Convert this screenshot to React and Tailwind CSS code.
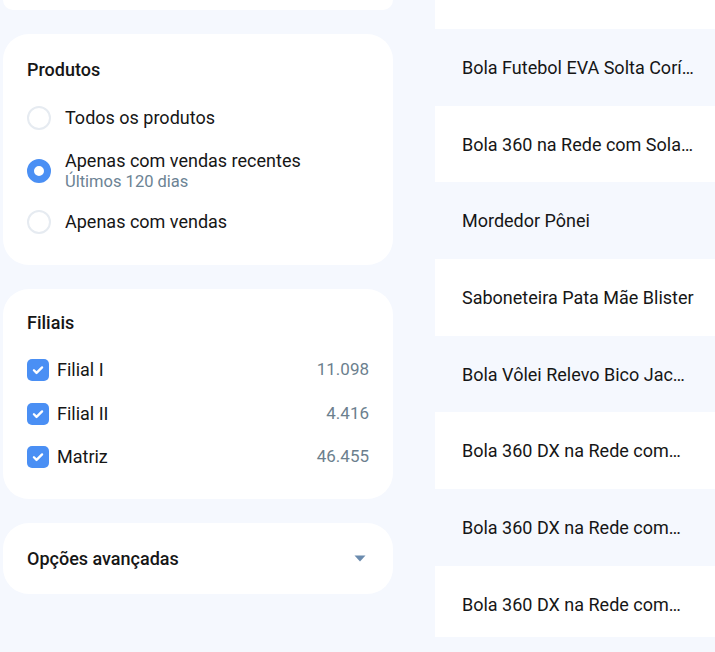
import React from 'react'

const produtos = [
  'Bola Futebol EVA Solta Corí…',
  'Bola 360 na Rede com Sola…',
  'Mordedor Pônei',
  'Saboneteira Pata Mãe Blister',
  'Bola Vôlei Relevo Bico Jac…',
  'Bola 360 DX na Rede com…',
  'Bola 360 DX na Rede com…',
  'Bola 360 DX na Rede com…',
]

const filiais = [
  { nome: 'Filial I', total: '11.098' },
  { nome: 'Filial II', total: '4.416' },
  { nome: 'Matriz', total: '46.455' },
]

function Radio({ checked }) {
  if (checked) {
    return <span className="h-6 w-6 shrink-0 rounded-full border-[7.5px] border-[#4a8ff4] bg-white"></span>
  }
  return <span className="h-6 w-6 shrink-0 rounded-full border-2 border-[#e6ebf1] bg-white"></span>
}

function Checkbox() {
  return (
    <span className="flex h-[22px] w-[22px] shrink-0 items-center justify-center rounded-[5px] bg-[#4a8ff4]">
      <svg width="14" height="14" viewBox="0 0 24 24" fill="none" stroke="white" strokeWidth="4" strokeLinecap="round" strokeLinejoin="round">
        <path d="M5 12.5l4.5 4.5L19 7.5" />
      </svg>
    </span>
  )
}

export default function App() {
  return (
    <div
      className="flex h-[652px] w-[715px] overflow-hidden bg-[#f5f8fe] text-[#161616]"
      style={{ fontFamily: 'Roboto, "Noto Sans", sans-serif' }}
    >
      {/* filtros */}
      <div className="ml-[3px] flex w-[390px] shrink-0 flex-col gap-6">
        <div className="h-[10px] rounded-b-[24px] bg-white"></div>

        <div className="rounded-[26px] bg-white px-6 pt-[23px] pb-[28px]">
          <h2 className="text-[18px] font-medium leading-[26px]">Produtos</h2>
          <div className="mt-[20px] flex flex-col">
            <label className="flex items-center gap-[14px] py-[3px]">
              <Radio />
              <span className="text-[18px] leading-[22px]">Todos os produtos</span>
            </label>
            <label className="mt-[17px] flex items-center gap-[14px]">
              <Radio checked />
              <span className="flex flex-col">
                <span className="text-[18px] leading-[22px]">Apenas com vendas recentes</span>
                <span className="text-[16.5px] leading-[20px] text-[#6c8394]">Últimos 120 dias</span>
              </span>
            </label>
            <label className="mt-[15px] flex items-center gap-[14px] py-[3px]">
              <Radio />
              <span className="text-[18px] leading-[22px]">Apenas com vendas</span>
            </label>
          </div>
        </div>

        <div className="rounded-[26px] bg-white px-6 pt-[21px] pb-[31px]">
          <h2 className="text-[18px] font-medium leading-[26px]">Filiais</h2>
          <div className="mt-[23px] flex flex-col gap-[21.5px]">
            {filiais.map(f => (
              <div key={f.nome} className="flex h-[22px] items-center gap-2">
                <Checkbox />
                <span className="flex-1 text-[18px] leading-[22px]">{f.nome}</span>
                <span className="text-[17px] text-[#6c7f8e]">{f.total}</span>
              </div>
            ))}
          </div>
        </div>

        <div className="flex h-[71px] items-center justify-between rounded-[26px] bg-white px-6">
          <span className="text-[18px] font-medium">Opções avançadas</span>
          <svg width="12" height="7" viewBox="0 0 12 7" className="mr-[3px]">
            <path d="M0.5 0.5h11L6 6.5z" fill="#6b8bae" />
          </svg>
        </div>
      </div>

      {/* lista */}
      <div className="ml-[42px] h-[637px] flex-1 overflow-hidden">
        <div className="h-[29px] bg-white"></div>
        {produtos.map((p, i) => (
          <div
            key={i}
            className={
              'flex h-[76.7px] items-start pt-[28px] pl-[27px] ' +
              (i % 2 === 0 ? 'bg-[#f5f8fe]' : 'bg-white')
            }
          >
            <span className="whitespace-nowrap text-[18px] leading-[22px]">{p}</span>
          </div>
        ))}
      </div>
    </div>
  )
}
